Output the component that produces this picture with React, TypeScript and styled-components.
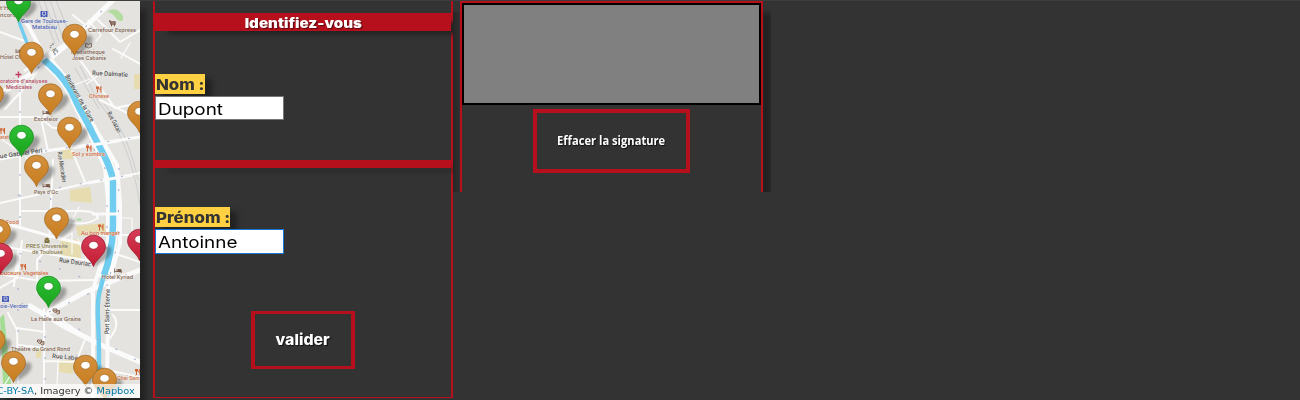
import React from 'react';
import styled, { createGlobalStyle } from 'styled-components';

const Global = createGlobalStyle`
  * { box-sizing: border-box; }
  body { margin: 0; background: #333; overflow: hidden; font-family: Inter, "Open Sans", sans-serif; }
`;

const Page = styled.main`
  display: flex;
  align-items: flex-start;
  width: 1300px;
  height: 400px;
  overflow: hidden;
  background: #333;
  border-top: 1px solid #3d3d3d;
`;

const MapPanel = styled.section`
  position: relative;
  flex: none;
  width: 140px;
  height: 397px;
  margin-right: 13px;
  box-shadow: 6px 8px 6px #222;
`;

const MapDrawing = styled.svg`
  display: block;
`;

const Attribution = styled.div`
  position: absolute;
  right: 0;
  bottom: 0;
  width: 140px;
  height: 14px;
  padding-right: 5px;
  overflow: hidden;
  display: flex;
  justify-content: flex-end;
  background: rgba(255, 255, 255, 0.72);
  color: #333;
  font: 9.3px/14px "DejaVu Sans", sans-serif;
  white-space: pre;
`;

const MapLink = styled.span`
  color: #0078a8;
`;

const FormPanel = styled.form`
  flex: none;
  display: flex;
  flex-direction: column;
  width: 300px;
  height: 397px;
  padding-top: 12px;
  border: solid #b5101b;
  border-width: 0 2px 1px;
`;

const Band = styled.div<{ $height: number }>`
  flex: none;
  display: flex;
  align-items: center;
  justify-content: center;
  height: ${(p) => p.$height}px;
  background: #b5101b;
  box-shadow: 10px 6px 5px -3px #222;
`;

const Stretch = styled.span<{ $x: number; $origin?: string }>`
  display: inline-block;
  white-space: pre;
  transform: scaleX(${(p) => p.$x});
  transform-origin: ${(p) => p.$origin ?? 'center'};
`;

const Title = styled.h1`
  margin: 0;
  padding-top: 2px;
  color: #fff;
  font-size: 13px;
  line-height: 18px;
  font-weight: 900;
  text-shadow: 1px 1px 1px #5d080e;
`;

const Field = styled.div<{ $top: number; $bottom: number }>`
  display: flex;
  flex-direction: column;
  align-items: flex-start;
  padding: ${(p) => p.$top}px 0 ${(p) => p.$bottom}px;
`;

const Label = styled.label<{ $width: number }>`
  width: ${(p) => p.$width}px;
  height: 20px;
  margin-bottom: 2px;
  padding-left: 1px;
  background: #ffd042;
  color: #333;
  font-size: 15px;
  line-height: 21px;
  font-weight: 800;
  box-shadow: 7px 5px 5px #222;
`;

const Entry = styled.div<{ $edge: string; $height: number }>`
  position: relative;
  width: 129px;
  height: ${(p) => p.$height}px;
  padding-left: 2px;
  background: #fff;
  border: 1px solid ${(p) => p.$edge};
  color: #000;
  font: 16px/24px Inter, sans-serif;
`;

const Action = styled.button<{ $w: number; $h: number; $edge: string; $font: string }>`
  display: flex;
  flex: none;
  align-items: center;
  justify-content: center;
  align-self: center;
  width: ${(p) => p.$w}px;
  height: ${(p) => p.$h}px;
  padding: 0;
  border: solid #b5101b;
  border-width: ${(p) => p.$edge};
  background: #333;
  color: #fff;
  font: ${(p) => p.$font};
  text-shadow: 1px 1px 1px #111;
`;

const SubmitRow = styled.div`
  display: flex;
  justify-content: center;
  padding-top: 57px;
`;

const SignaturePanel = styled.section`
  flex: none;
  width: 318px;
  height: 191px;
  padding-left: 7px;
  overflow: hidden;
  background: linear-gradient(90deg, #262626, #303030 7px) 0 11px / 7px 180px no-repeat;
`;

const SignatureFrame = styled.div`
  display: flex;
  flex-direction: column;
  width: 303px;
  height: 230px;
  border: 2px solid #b5101b;
  box-shadow: 8px 12px 5px #222;
`;

const Pad = styled.div`
  width: 299px;
  height: 102px;
  margin-bottom: 4px;
  border: 2px solid #000;
  background: #808080;
`;

const Speck = styled.div`
  width: 2px;
  height: 1px;
  margin: -1px 0 0 241px;
  background: #b5101b;
`;

const COLORS = {
  orange: ['#d4913f', '#c87c1d', '#9c6420'],
  green: ['#2fc236', '#18a11c', '#128519'],
  red: ['#d63d59', '#c31c31', '#941629'],
};
type Hue = keyof typeof COLORS;

const pins: [number, number, Hue][] = [
  [18.5, -9.5, 'green'], [74.5, 24, 'orange'], [31.5, 42, 'orange'], [-8.5, 82, 'orange'],
  [50.5, 83.5, 'orange'], [139.5, 101, 'orange'], [69.5, 117, 'orange'], [21.5, 125, 'green'],
  [36.5, 155, 'orange'], [56.5, 207.5, 'orange'], [-1.5, 219, 'orange'], [139.5, 229, 'red'], [93.5, 235, 'red'],
  [0.5, 243, 'red'], [48.5, 276, 'green'], [-7, 328, 'orange'], [13.5, 351, 'orange'],
  [85.5, 355, 'orange'], [104.5, 368, 'orange'],
];

const BROWN = '#79594a';
const BLUE = '#4358b5';
const FOOD = '#cf6232';
const ROAD = '#444';

// text, left x, baseline y, width, colour, rotation
const places: [string, number, number, number, string, number?][] = [
  ["t'Hôt", 0, 10, 14, BROWN], ['ncorde', 0, 17, 19, BROWN],
  ['Gare de Toulouse-', 21, 22.5, 47, BLUE], ['Matabiau', 32, 28.5, 25, BLUE],
  ['Carrefour Express', 88, 32, 48, BROWN],
  ['Médiathèque', 71, 54, 34, BROWN], ['José Cabanis', 72, 60, 34, BROWN],
  ['Hôtel Chau', 0, 59, 28, BROWN],
  ["oratoire d'analyses", 0, 82.5, 47.5, '#ad3858'], ['Médicales', 6, 88.5, 26, '#ad3858'],
  ['Rue Dalmatie', 92, 75, 36, ROAD, 3], ['Chinese', 89, 97.5, 20, FOOD],
  ['1, IC', 49, 45, 11, ROAD, 60], ['Boulevard de la Gare', 65, 76, 53, ROAD, 61],
  ['Excelsior', 34, 121, 24, BROWN], ['Rue Gazan', 107, 113, 23, ROAD, 62],
  ['arat', 0, 139, 9, FOOD], ['Sol y sombra', 72, 156, 33, FOOD],
  ['ue Gabriel Péri', 0, 158.5, 43, ROAD, -8], ['Rue Mercadier', 57.5, 152, 31, ROAD, 81],
  ["Pays d'Oc", 34, 193.5, 24, BROWN], ['Food', 6, 224, 13, FOOD],
  ['Au bon manger', 81, 235, 39, FOOD],
  ['PRES Université', 26, 248, 42, '#80713d'], ['de Toulouse', 32, 254, 31, '#80713d'],
  ['Rue Dauriac', 59, 262, 32, ROAD, 8], ['ouceurs Vegetales', 0.5, 275, 48, FOOD],
  ['Hôtel Kyriad', 102, 278.5, 31, BROWN],
  ['ois-Verdier', 0, 307.5, 28, BLUE], ['La Halle aux Grains', 31, 320.5, 50, BROWN],
  ['Port Saint-Étienne', 109, 334, 45, ROAD, -89],
  ['Théâtre du Grand Rond', 11, 351, 59, BROWN],
  ['Rue Labé', 52, 358, 26, ROAD, 5], ['Chai Sain', 117, 380, 22.5, FOOD],
];

const Fork = ({ x, y }: { x: number; y: number }) => (
  <path transform={`translate(${x} ${y})`} d="M-.5 0v2.200h2V0M.5 0v6M4 6V0q-1.200 1-1.200 3.200h1" fill="none" stroke={FOOD} strokeWidth="1" />
);

const Bed = ({ x, y }: { x: number; y: number }) => (
  <path transform={`translate(${x} ${y})`} d="M0 0v4M0 3h7v1M1.5 1.4h1.2M3.3 1h3.3v2H3.3z" fill={BROWN} stroke={BROWN} strokeWidth=".8" />
);

const Mask = ({ x, y }: { x: number; y: number }) => (
  <g transform={`translate(${x} ${y})`} fill="#e8e0d9" stroke={BROWN} strokeWidth=".9">
    <path d="M0 0h4v2q-1.800 3-4 0zM3.500 2l3-.5v3q-2 1.500-3.500-1z" />
    <path d="M1 1.500h2M4.500 3h1.500" strokeWidth=".7" />
  </g>
);

const Train = ({ x, y }: { x: number; y: number }) => (
  <g transform={`translate(${x} ${y})`}>
    <rect width="7" height="6" rx=".5" fill={BLUE} />
    <path d="M2 1h3v3H2zM2 5.500l1-1M5 5.500l-1-1" fill="none" stroke="#fff" strokeWidth=".6" />
  </g>
);

const Pin = ({ x, y, hue }: { x: number; y: number; hue: Hue }) => (
  <g transform={`translate(${x} ${y})`}>
    <path d="M0 32L9 14Q16 8 18 14Q19 20 10 26Z" fill="#222" opacity=".36" filter="url(#soft)" />
    <path
      d="M0 31.500C-2.500 24-12 20-12 11.800A12 11.600 0 0 1 12 11.800C12 20 2.500 24 0 31.500Z"
      fill={`url(#${hue})`} stroke={COLORS[hue][2]} strokeWidth=".7"
    />
    <ellipse cy="10.300" rx="4.700" ry="3.900" fill="#fff" stroke={COLORS[hue][2]} strokeWidth=".6" />
  </g>
);

const RIVER_NORTH = 'M42 58Q50 65 58 73S70 87 75 99S86 119 92 132S112 166 113 182V225C113 248 108 264 104 275';
const RIVER_SOUTH = 'M109 262Q103 276 100 290Q97 300 98 320T99 365Q100 385 108 398';

const CityMap = () => (
  <MapDrawing width="140" height="397" viewBox="0 1 140 397">
    <defs>
      <filter id="soft" x="-30%" y="-30%" width="160%" height="160%"><feGaussianBlur stdDeviation="1.8" /></filter>
      {(Object.keys(COLORS) as Hue[]).map((h) => (
        <linearGradient id={h} key={h} x1="0" y1="0" x2="0" y2="1">
          <stop stopColor={COLORS[h][0]} /><stop offset="1" stopColor={COLORS[h][1]} />
        </linearGradient>
      ))}
    </defs>
    <rect width="140" height="400" fill="#e4e3df" />
    <path d="M0 318l4-4 7 70H3z" fill="#a5dc94" />
    <path d="M107 12q9-7 16 4v4q-4 3-7-2t-9-6" fill="#b5dca0" />
    <path d="M62 149h11v10H62zM70 190l20-3 2 16-22-2zM76 226l29-3 1 11-28 2zM60 241l20-2 1 20-20-3zM134 74h6v15h-6zM59 360h14v14l-14-2zM36 348h5v10h-5z" fill="#e6dcaf" />
    <path d="M38 0l17 44M44 0l15 42M50 0l13 39M56 0l14 35M80 66l20 39M75 68l24 41M100 104Q130 140 140 205M104 104Q128 132 138 180" fill="none" stroke="#cfced0" strokeWidth="1.100" />
    <g fill="none" stroke="#fbfbfb" strokeLinecap="round" strokeLinejoin="round">
      <path d="M-4 97L32 73L69 43L113 0M49 312L85 292L140 270M30 306L67 328L105 347L140 362" strokeWidth="5" />
      <path d="M0 159L45 151L96 144L140 137M-3 221L50 236L91 246" strokeWidth="3" />
      <path d="M24 18L44 55L68 83L87 127L105 168L108 200V240L93 290V400M50 58L74 89L95 128L117 165L120 205V243L108 286L107 400" strokeWidth="4" />
      <path d="M0 203L45 193L87 183L140 173M0 32L30 43L45 61L27 85L5 109M20 90V225M55 92L42 123L48 151M0 117H39L53 128H70M94 16L120 42L140 30M113 49L140 64M94 32L73 15M80 60L115 108L140 103M100 100L140 119M72 151L85 182M53 160L49 247L37 260V293M22 211H82Q96 211 98 218Q88 225 73 223L52 218M18 251L14 286M0 246L91 261M0 274L40 281L94 280M44 309V400M8 313L17 330L18 382M17 328L45 332M18 345L44 348M44 361L78 362M60 319L86 337L78 357M109 310H140M110 338Q121 324 113 315M107 370L140 377M0 288L17 278L22 241M100 235H140M119 255L140 262" strokeWidth="2" />
      <path d="M88 20L101 35L96 41M66 88L90 79M77 140L80 117M104 71L87 84M130 43L121 58M0 138L24 155L36 168M70 224L79 207M60 240L72 233V254M78 239L88 264M120 218H132V235M5 384L21 359M57 384L59 348" strokeWidth="1.200" />
      <path d={RIVER_NORTH} strokeWidth="10" />
    </g>
    <g fill="none" stroke="#70cdef">
      <path d={RIVER_NORTH} strokeWidth="6.500" />
      <path d={RIVER_SOUTH} strokeWidth="4.500" />
      <path d="M19 22L27 43" strokeWidth="3.500" />
    </g>
    <path d="M24 71L76 37M72 148L118 141M88 183L132 175M92 214H122" stroke="#fafafa" strokeWidth="3" />
    <g fill="none" stroke="#a5aed0" strokeWidth="1.100" strokeDasharray="2 19">
      <path d="M4 93L32 73L69 43L113 0M-3 199L140 173M20 90V225M45 151L140 137M49 242L51 190M94 149L112 181M119 168L118 240L108 284M45 294V400M18 288V380M60 319L140 362M107 205V266M0 246L91 281M49 312L140 270" />
    </g>
    <g fontFamily="Inter, sans-serif" fontWeight="500">
      {places.map(([label, x, y, w, color, turn]) => (
        <text key={label} x={x} y={y} textLength={w} lengthAdjust="spacingAndGlyphs" fill={color}
          transform={turn ? `rotate(${turn} ${x} ${y})` : undefined}
          fontSize={color === ROAD ? 6.2 : 5.4}
          stroke="#eeeeea" strokeWidth=".6" paintOrder="stroke">{label}</text>
      ))}
    </g>
    <Train x={40.5} y={11} /><Train x={2} y={296} />
    <Fork x={97} y={86.5} /><Fork x={0.5} y={128} /><Fork x={87} y={145.5} /><Fork x={99} y={224.5} /><Fork x={21.5} y={264} /><Fork x={136} y={369} />
    <Bed x={43} y={110.5} /><Bed x={43} y={183.5} /><Bed x={114.5} y={268.5} /><Bed x={16} y={49} />
    <Mask x={53} y={309} /><Mask x={37.5} y={340} />
    <path d="M18.500 71.500v6M15.500 74.500h6" stroke="#c03c62" strokeWidth="1.400" />
    <path d="M109 21h1l1 3h4v-2h-4M111 25.500h1M114 25.500h1" fill="none" stroke={BROWN} strokeWidth="1.300" />
    <path d="M85.500 43.500q2 0 3 1q1-1 3-1v3.500q-2 0-3 1q-1-1-3-1z" fill="none" stroke={BROWN} strokeWidth=".8" />
    <path d="M44 239l3-1.500 3 1.500-3 1.500zM44.500 240v3h5v-3" fill="#80713d" />
    <path d="M77 219.500h4" stroke="#9ddc9d" strokeWidth="2" />
    {pins.map(([x, y, hue]) => <Pin key={`${x}-${y}`} x={x} y={y} hue={hue} />)}
  </MapDrawing>
);

export default function App() {
  return (
    <Page>
      <Global />
      <MapPanel>
        <CityMap />
        <Attribution>
          <Stretch $x={1.05} $origin="right"><MapLink>C-BY-SA</MapLink>, Imagery © <MapLink>Mapbox</MapLink></Stretch>
        </Attribution>
      </MapPanel>
      <FormPanel>
        <Band $height={18}><Title><Stretch $x={1.165}>Identifiez-vous</Stretch></Title></Band>
        <Field $top={43} $bottom={40}>
          <Label $width={50}><Stretch $x={1.12} $origin="left">Nom :</Stretch></Label>
          <Entry $edge="#767676" $height={24}><Stretch $x={1.18} $origin="left">Dupont</Stretch></Entry>
        </Field>
        <Band $height={8} />
        <Field $top={39} $bottom={0}>
          <Label $width={75}><Stretch $x={1.125} $origin="left">Prénom :</Stretch></Label>
          <Entry $edge="#1677d2" $height={25}><Stretch $x={1.18} $origin="left">Antoinne</Stretch></Entry>
        </Field>
        <SubmitRow>
          <Action type="button" $w={104} $h={58} $edge="3px 4px" $font="800 15px/18px Inter, sans-serif"><Stretch $x={1.06}>valider</Stretch></Action>
        </SubmitRow>
      </FormPanel>
      <SignaturePanel>
        <SignatureFrame>
          <Pad />
          <Action type="button" $w={157} $h={64} $edge="4px" $font='700 12px/16px "Open Sans", sans-serif'><Stretch $x={0.93}>Effacer la signature</Stretch></Action>
        </SignatureFrame>
      </SignaturePanel>
      <Speck />
    </Page>
  );
}
